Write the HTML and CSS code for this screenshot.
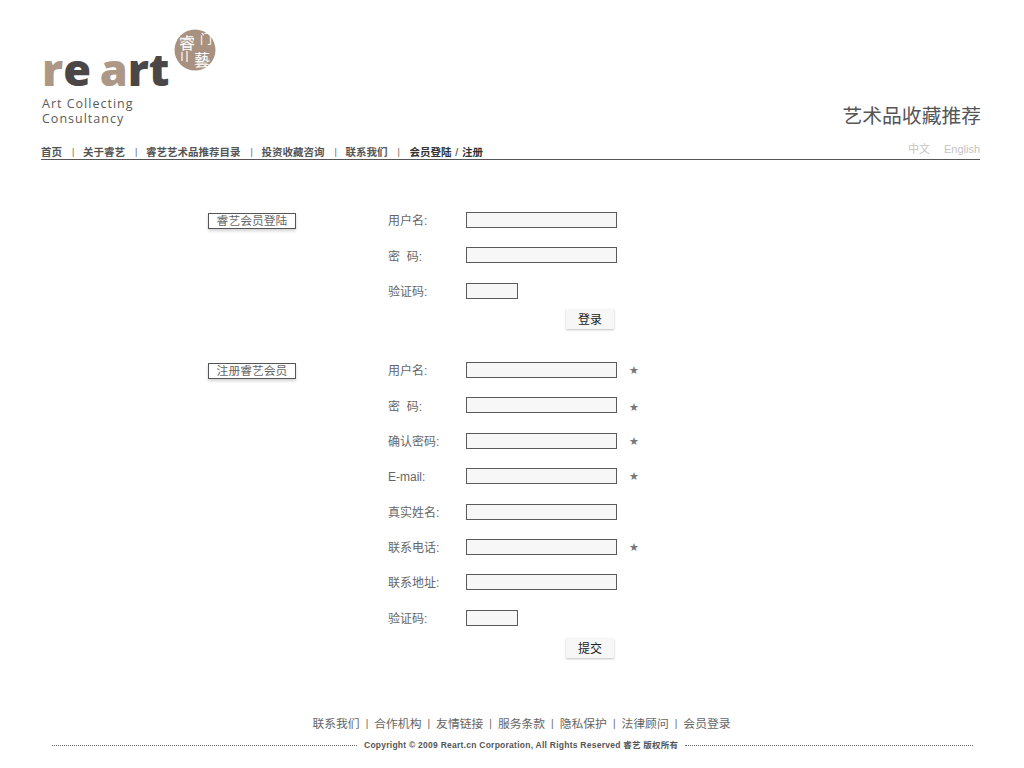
FILE: index.html
```html
<!DOCTYPE html>
<html>
<head>
    <meta charset="utf-8">
    <title>睿艺会员登陆</title>
    <link rel="stylesheet" href="styles.css">
</head>

<body>
    <div id="header">
        <div id="logo">
            <div class="logo-word"><span class="tan">r</span><span class="dark">e</span> <span class="tan">a</span><span class="dark">rt</span></div>
            <div class="logo-sub">Art Collecting<br>Consultancy</div>
            <svg class="logo-seal" width="42" height="42" viewBox="0 0 42 42">
                <circle cx="21" cy="21" r="20.5" fill="#a8927f"/>
                <path d="M8 23v9M13 22v11" stroke="#fff" stroke-width="1.2" fill="none"/>
                <text x="13" y="20" class="seal-char">睿</text>
                <text x="32" y="15" class="seal-char-small">门</text>
                <text x="28" y="37" class="seal-char">藝</text>
            </svg>
        </div>
        <div class="slogan-title">艺术品收藏推荐</div>
    </div>

    <div id="nav">
        <a>首页</a><i>|</i>
        <a>关于睿艺</a><i>|</i>
        <a>睿艺艺术品推荐目录</a><i>|</i>
        <a>投资收藏咨询</a><i>|</i>
        <a>联系我们</a><i>|</i>
        <a class="current">会员登陆<span class="slash">/</span>注册</a>
        <div class="lang"><span>中文</span><span>English</span></div>
    </div>

    <div id="content">
        <div class="section login">
            <div class="section-tag">睿艺会员登陆</div>
            <form class="rows">
                <div class="row"><label>用户名:</label><input type="text"></div>
                <div class="row"><label class="low">密&nbsp;&nbsp;码:</label><input type="password"></div>
                <div class="row"><label>验证码:</label><input class="short" type="text"></div>
                <div class="row-btn"><button type="button">登录</button></div>
            </form>
        </div>

        <div class="section">
            <div class="section-tag">注册睿艺会员</div>
            <form class="rows">
                <div class="row"><label>用户名:</label><input type="text"><span class="star">★</span></div>
                <div class="row"><label class="low">密&nbsp;&nbsp;码:</label><input type="password"><span class="star low">★</span></div>
                <div class="row"><label>确认密码:</label><input type="password"><span class="star">★</span></div>
                <div class="row"><label>E-mail:</label><input type="text"><span class="star">★</span></div>
                <div class="row"><label>真实姓名:</label><input type="text"></div>
                <div class="row"><label>联系电话:</label><input type="text"><span class="star">★</span></div>
                <div class="row"><label>联系地址:</label><input type="text"></div>
                <div class="row"><label>验证码:</label><input class="short" type="text"></div>
                <div class="row-btn"><button type="button">提交</button></div>
            </form>
        </div>
    </div>

    <div id="footer">
        <div class="foot-links">
            <a>联系我们</a><i>|</i><a>合作机构</a><i>|</i><a>友情链接</a><i>|</i><a>服务条款</a><i>|</i><a>隐私保护</a><i>|</i><a>法律顾问</a><i>|</i><a>会员登录</a>
        </div>
        <div class="copyright">
            <span class="dots left"></span>
            <span class="copy-text">Copyright © 2009 Reart.cn Corporation, All Rights Reserved 睿艺 版权所有</span>
            <span class="dots"></span>
        </div>
    </div>
</body>

</html>
```

FILE: styles.css
```css
/* General */
body, html {
    margin: 0;
    padding: 0;
    background: #fff;
}
body {
    font-family: "Liberation Sans", "Noto Sans CJK SC", sans-serif;
    color: #555;
    height: 768px;
    overflow: hidden;
}

/* Header */
#header {
    display: flex;
    justify-content: space-between;
    align-items: flex-end;
    height: 143px;
    padding: 0 43px 0 42px;
    box-sizing: border-box;
}
#logo { position: relative; width: 190px; height: 127px; }
.logo-word {
    font-family: "Open Sans", sans-serif;
    font-weight: 800;
    font-size: 45px;
    line-height: 50px;
    letter-spacing: 0;
    padding-top: 28px;
    word-spacing: -3px;
}
.tan { color: #ad9887; }
.dark { color: #4b4746; }
.logo-sub {
    font-family: "Open Sans", sans-serif;
    font-size: 12.5px;
    line-height: 15px;
    letter-spacing: 1px;
    color: #5a5a5a;
    margin-top: 2px;
}
.logo-seal { position: absolute; left: 132px; top: 13px; }
.seal-char { font-size: 16px; fill: #fff; text-anchor: middle; font-family: "Noto Sans CJK TC", sans-serif; }
.seal-char-small { font-size: 12px; fill: #fff; text-anchor: middle; font-family: "Noto Sans CJK TC", sans-serif; }

.slogan-title {
    font-size: 19.8px;
    line-height: 28px;
    color: #555;
    margin-bottom: 13px;
}

/* Nav */
#nav {
    display: flex;
    align-items: center;
    gap: 10px;
    margin: 0 44px 0 41px;
    height: 15px;
    padding-top: 1px;
    border-bottom: 1px solid #555;
    font-size: 10.5px;
    font-weight: 700;
    color: #555;
}
#nav i { width: 1px; font-style: normal; font-weight: 400; font-size: 9px; color: #666; }
#nav .current { margin-left: 1px; color: #333; }
.slash { display: inline-block; width: 1em; text-align: center; font-weight: 400; }
.lang {
    display: flex;
    gap: 14px;
    margin-left: auto;
    margin-top: -6px;
    font-size: 11px;
    font-weight: 400;
    line-height: 14px;
    color: #c4c4c4;
}

/* Forms */
#content { padding: 52px 0 0 208px; }
.section { display: flex; align-items: flex-start; }
.section.login { height: 150px; }
.section-tag {
    width: 86px;
    height: 14px;
    margin-top: 1px;
    margin-right: 92px;
    border: 1px solid #555;
    box-shadow: 0 2px 3px rgba(0, 0, 0, 0.18);
    font-size: 11.8px;
    line-height: 15px;
    text-align: center;
    color: #666;
}
.rows { display: block; margin: 0; }
.row {
    display: flex;
    align-items: flex-start;
    height: 35.38px;
}
.row label {
    width: 78px;
    font-size: 12px;
    line-height: 18px;
    color: #666;
}
.row label.low { line-height: 21px; }
.row input {
    width: 151px;
    height: 16px;
    padding: 0;
    margin: 0;
    box-sizing: border-box;
    border: 1px solid #5a5a5a;
    background: #f7f7f7;
}
.row input.short { width: 52px; }
.star {
    margin-left: 12px;
    font-family: "DejaVu Sans", sans-serif;
    font-size: 11px;
    line-height: 18px;
    color: #777;
}
.star.low { line-height: 21px; }
.row-btn {
    display: flex;
    justify-content: flex-end;
    width: 226px;
    margin-top: -7px;
}
.login .row-btn { margin-top: -9px; }
button {
    width: 48px;
    height: 20px;
    padding: 0 0 2px;
    border: 0;
    background: #f7f7f7;
    box-shadow: 0 1px 2px rgba(0, 0, 0, 0.25);
    font-family: "Liberation Sans", "Noto Sans CJK SC", sans-serif;
    font-size: 12px;
    color: #222;
}

/* Footer */
#footer {
    position: absolute;
    left: 52px;
    top: 716px;
    width: 921px;
}
.foot-links {
    display: flex;
    justify-content: center;
    gap: 6px;
    padding-left: 18px;
    font-size: 11.8px;
    line-height: 16px;
    color: #666;
}
.foot-links i { font-style: normal; font-size: 10px; }
.copyright {
    display: flex;
    align-items: center;
    gap: 7px;
    margin-top: 7px;
}
.dots { flex-grow: 1; border-top: 1px dotted #666; }
.dots.left { flex: 0 0 305px; }
.copy-text {
    font-size: 8.5px;
    line-height: 12px;
    font-weight: 700;
    letter-spacing: 0.25px;
    color: #555;
    white-space: nowrap;
}
```
